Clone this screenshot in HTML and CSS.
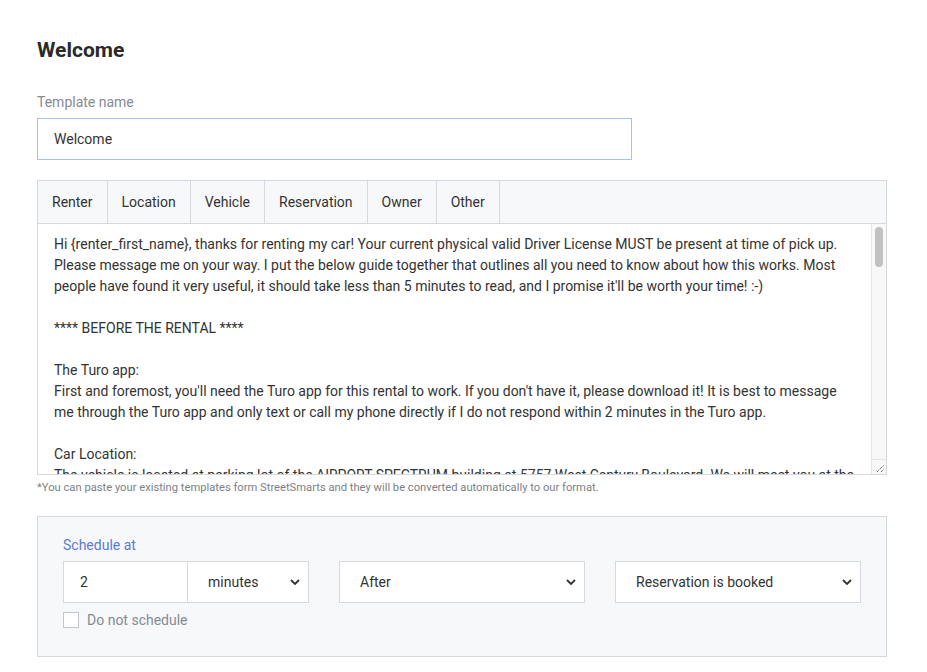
FILE: index.html
```html
<!DOCTYPE html>
<html>
<head>
<meta charset="utf-8">
<link rel="stylesheet" href="styles.css">
</head>
<body>
<div class="page">
  <h1 class="title">Welcome</h1>
  <label class="field-label">Template name</label>
  <input class="name-input" type="text" value="Welcome">

  <div class="editor">
    <div class="tabs">
      <div class="tab">Renter</div>
      <div class="tab">Location</div>
      <div class="tab">Vehicle</div>
      <div class="tab">Reservation</div>
      <div class="tab">Owner</div>
      <div class="tab">Other</div>
    </div>
    <div class="body-wrap">
    <textarea class="body-text" wrap="off">Hi {renter_first_name}, thanks for renting my car! Your current physical valid Driver License MUST be present at time of pick up.
Please message me on your way. I put the below guide together that outlines all you need to know about how this works. Most
people have found it very useful, it should take less than 5 minutes to read, and I promise it'll be worth your time! :-)

**** BEFORE THE RENTAL ****

The Turo app:
First and foremost, you'll need the Turo app for this rental to work. If you don't have it, please download it! It is best to message
me through the Turo app and only text or call my phone directly if I do not respond within 2 minutes in the Turo app.

Car Location:
The vehicle is located at parking lot of the AIRPORT SPECTRUM building at 5757 West Century Boulevard. We will meet you at the
entrance of the parking lot. Please message me when you are 10 minutes away so I can be there on time.

Pick up:
Please take photos of the vehicle before you drive off, including all four sides, the interior, the fuel level and the mileage.
Upload these photos to the Turo app so we both have a record of the condition of the car at the start of the trip.

**** AFTER THE RENTAL ****

Return:
Please return the vehicle to the same parking lot where you picked it up.

Thank you again for choosing my car, and have a great trip!
</textarea>
      <div class="scrollbar">
        <div class="thumb"></div>
        <div class="resizer">
          <svg width="14" height="14" viewBox="0 0 14 14"><path d="M5 12L12 5M9 12L12 9" fill="none" stroke="#555" stroke-width="1" stroke-dasharray="1.2 0.8"/></svg>
        </div>
      </div>
    </div>
  </div>
  <p class="note">*You can paste your existing templates form StreetSmarts and they will be converted automatically to our format.</p>

  <div class="schedule">
    <div class="schedule-label">Schedule at</div>
    <div class="schedule-row">
      <div class="pair">
        <input class="num-input" type="text" value="2">
        <div class="select-wrap">
          <select class="select select-joined"><option>minutes</option></select>
          <svg class="chev" width="10" height="6" viewBox="0 0 10 6"><path d="M1 1l4 4 4-4" fill="none" stroke="#333" stroke-width="1.8"/></svg>
        </div>
      </div>
      <div class="select-wrap">
        <select class="select"><option>After</option></select>
        <svg class="chev" width="10" height="6" viewBox="0 0 10 6"><path d="M1 1l4 4 4-4" fill="none" stroke="#333" stroke-width="1.8"/></svg>
      </div>
      <div class="select-wrap">
        <select class="select"><option>Reservation is booked</option></select>
        <svg class="chev" width="10" height="6" viewBox="0 0 10 6"><path d="M1 1l4 4 4-4" fill="none" stroke="#333" stroke-width="1.8"/></svg>
      </div>
    </div>
    <label class="check-row">
      <input class="check" type="checkbox">
      <span>Do not schedule</span>
    </label>
  </div>
</div>
</body>
</html>
```

FILE: styles.css
```css
* { box-sizing: border-box; }
html, body { margin: 0; padding: 0; background: #fff; }
body { font-family: Roboto, "Open Sans", Arial, sans-serif; color: #333; }

.page {
  padding: 38px 40px 0 37px;
  display: flex;
  flex-direction: column;
}

.title {
  margin: 0;
  font-size: 21px;
  line-height: 25px;
  font-weight: 700;
  color: #2a2a2a;
}

.field-label {
  margin-top: 29px;
  font-size: 14px;
  line-height: 20px;
  color: #868b94;
}

.name-input {
  margin-top: 6px;
  width: 595px;
  height: 42px;
  border: 1px solid #a6c1ee;
  padding: 0 16px;
  font-family: Roboto, Arial, sans-serif;
  font-size: 14px;
  color: #333;
  outline: none;
  background: #fff;
}

.editor {
  margin-top: 20px;
  border: 1px solid #d5d8dd;
  display: flex;
  flex-direction: column;
}

.tabs {
  display: flex;
  background: #f7f8fa;
  border-bottom: 1px solid #d5d8dd;
  height: 43px;
}

.tab {
  padding: 0 14px;
  display: flex;
  align-items: center;
  font-size: 14px;
  color: #333;
  border-right: 1px solid #d5d8dd;
}

.body-wrap {
  position: relative;
}

.body-text {
  display: block;
  width: 100%;
  height: 250px;
  border: none;
  outline: none;
  resize: none;
  padding: 10px 17px 0 16px;
  font-family: Roboto, Arial, sans-serif;
  font-size: 14px;
  line-height: 21px;
  color: #333;
  background: #fff;
  overflow: hidden;
  white-space: pre;
}

.scrollbar {
  position: absolute;
  top: 0;
  right: 0;
  bottom: 0;
  width: 15px;
  background: #f8f8f8;
  border-left: 1px solid #e4e4e4;
}

.thumb {
  position: absolute;
  top: 3px;
  left: 3px;
  width: 8px;
  height: 40px;
  border-radius: 4px;
  background: #c1c1c1;
}

.resizer {
  position: absolute;
  left: 0;
  right: 0;
  bottom: 0;
  height: 15px;
  border-top: 1px solid #e4e4e4;
  display: flex;
  align-items: flex-end;
  justify-content: flex-end;
}

.resizer svg { display: block; }

.note {
  margin: 6px 0 0 0;
  font-size: 11.2px;
  line-height: 13px;
  color: #7b7f87;
}

.schedule {
  margin-top: 22px;
  border: 1px solid #d5d8dd;
  background: #f7f8fa;
  padding: 18px 26px 26px 25px;
  display: flex;
  flex-direction: column;
}

.schedule-label {
  font-size: 14px;
  line-height: 20px;
  color: #5b7ad8;
}

.schedule-row {
  margin-top: 6px;
  display: grid;
  grid-template-columns: 246px 246px 246px;
  column-gap: 30px;
}

.pair {
  display: grid;
  grid-template-columns: 124px 1fr;
}

.num-input {
  height: 42px;
  border: 1px solid #d5d8dd;
  border-right: none;
  padding: 0 16px;
  font-family: Roboto, Arial, sans-serif;
  font-size: 14px;
  color: #333;
  background: #fff;
  outline: none;
  width: 100%;
}

.select-wrap {
  position: relative;
  display: flex;
}

.select {
  appearance: none;
  -webkit-appearance: none;
  width: 100%;
  height: 42px;
  border: 1px solid #d5d8dd;
  border-radius: 0;
  background: #fff;
  padding: 0 30px 0 20px;
  font-family: Roboto, Arial, sans-serif;
  font-size: 14px;
  color: #333;
  outline: none;
}

.chev {
  position: absolute;
  right: 9px;
  top: 18px;
  pointer-events: none;
}

.check-row {
  margin-top: 7px;
  display: flex;
  align-items: center;
  gap: 8px;
  font-size: 14px;
  line-height: 20px;
  color: #868b94;
}

.check {
  appearance: none;
  -webkit-appearance: none;
  margin: 0;
  width: 16px;
  height: 16px;
  border: 1px solid #c3c6cc;
  background: #fff;
}
```
